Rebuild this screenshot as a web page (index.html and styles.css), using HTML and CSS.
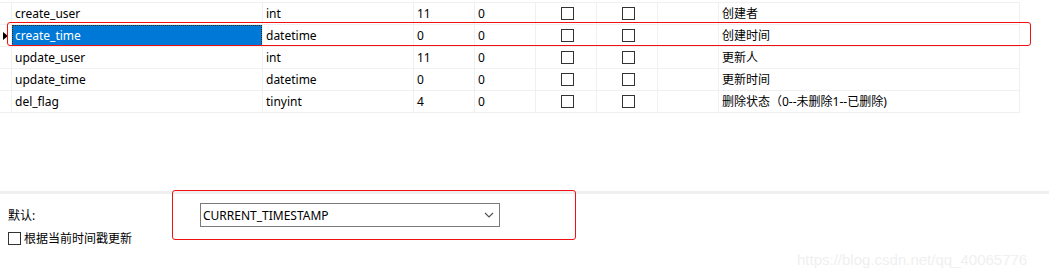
FILE: index.html
```html
<!DOCTYPE html>
<html lang="zh-CN">
<head>
    <meta charset="UTF-8">
    <title>表设计</title>
    <link rel="stylesheet" href="styles.css">
</head>
<body>
    <div class="page">
        <table class="fields">
            <colgroup>
                <col class="c-mark"><col class="c-name"><col class="c-type"><col class="c-len">
                <col class="c-dec"><col class="c-chk"><col class="c-chk"><col class="c-virt"><col class="c-note">
            </colgroup>
            <tr>
                <td class="mark"></td><td>create_user</td><td>int</td><td>11</td><td>0</td>
                <td class="chk"><span class="box"></span></td><td class="chk"><span class="box"></span></td><td></td><td>创建者</td>
            </tr>
            <tr>
                <td class="mark"><span class="arrow"></span></td><td class="selected"><span class="focus">create_time</span></td><td>datetime</td><td>0</td><td>0</td>
                <td class="chk"><span class="box"></span></td><td class="chk"><span class="box"></span></td><td></td><td>创建时间</td>
            </tr>
            <tr>
                <td class="mark"></td><td>update_user</td><td>int</td><td>11</td><td>0</td>
                <td class="chk"><span class="box"></span></td><td class="chk"><span class="box"></span></td><td></td><td>更新人</td>
            </tr>
            <tr>
                <td class="mark"></td><td>update_time</td><td>datetime</td><td>0</td><td>0</td>
                <td class="chk"><span class="box"></span></td><td class="chk"><span class="box"></span></td><td></td><td>更新时间</td>
            </tr>
            <tr>
                <td class="mark"></td><td>del_flag</td><td>tinyint</td><td>4</td><td>0</td>
                <td class="chk"><span class="box"></span></td><td class="chk"><span class="box"></span></td><td></td><td>删除状态（0--未删除1--已删除)</td>
            </tr>
        </table>

        <div class="divider"></div>

        <div class="props">
            <div class="prop-label">默认:</div>
            <div class="select">
                <span>CURRENT_TIMESTAMP</span>
                <svg class="chev" width="10" height="6" viewBox="0 0 10 6"><path d="M1 1 L5 5 L9 1" fill="none" stroke="#555" stroke-width="1.2"/></svg>
            </div>
            <label class="check"><span class="box"></span>根据当前时间戳更新</label>
        </div>

        <div class="mark-red row-mark"></div>
        <div class="mark-red prop-mark"></div>
        <div class="watermark">https://blog.csdn.net/qq_40065776</div>
    </div>
</body>
</html>
```

FILE: styles.css
```css
body {
    margin: 0;
    background: #fff;
    font-family: "Noto Sans", "Noto Sans CJK SC", sans-serif;
    font-size: 12px;
    color: #000;
}

.page {
    position: relative;
    width: 1049px;
    height: 279px;
    overflow: hidden;
    padding-top: 2px;
    box-sizing: border-box;
}

.fields {
    border-collapse: separate;
    border-spacing: 0;
    border-top: 1px solid #f0f0f0;
    table-layout: fixed;
    width: 1020px;
}

.c-mark { width: 12px; }
.c-name { width: 251px; }
.c-type { width: 151px; }
.c-len { width: 61px; }
.c-dec { width: 61px; }
.c-chk { width: 61px; }
.c-virt { width: 61px; }
.c-note { width: 301px; }

.fields td {
    height: 21px;
    padding: 0 0 0 3px;
    border-right: 1px solid #f0f0f0;
    border-bottom: 1px solid #f0f0f0;
    white-space: nowrap;
    overflow: hidden;
    line-height: 16px;
}

.fields td.mark {
    padding: 0;
}

.arrow {
    display: block;
    width: 0;
    height: 0;
    margin-left: 3px;
    border-left: 5px solid #000;
    border-top: 4px solid transparent;
    border-bottom: 4px solid transparent;
}

.fields td.selected {
    padding: 0;
    background: #0078d7;
    color: #fff;
}

.focus {
    display: block;
    height: 19px;
    line-height: 19px;
    padding-left: 2px;
    border: 1px dotted #3a2a10;
}

.fields td.chk {
    padding: 0;
}

.chk .box {
    display: block;
    margin: 0 auto;
    position: relative;
    left: 1px;
}

.box {
    display: inline-block;
    width: 11px;
    height: 11px;
    border: 1px solid #333;
    background: #fff;
}

.divider {
    margin-top: 78px;
    height: 3px;
    background: #f0f0f0;
}

.props {
    display: grid;
    grid-template-columns: 192px 300px;
    grid-template-rows: 24px 20px;
    row-gap: 1px;
    padding: 9px 8px 0;
}

.prop-label {
    align-self: center;
}

.select {
    display: flex;
    align-items: center;
    justify-content: space-between;
    border: 1px solid #7a7a7a;
    padding: 0 5px 0 2px;
}

.check {
    display: flex;
    align-items: center;
    gap: 3px;
    grid-column: 1 / 3;
}

.mark-red {
    position: absolute;
    border: 1.5px solid #f01010;
    border-radius: 3px;
}

.row-mark {
    left: 7px;
    top: 22px;
    width: 1022px;
    height: 22px;
}

.prop-mark {
    left: 172px;
    top: 190px;
    width: 402px;
    height: 48px;
}

.watermark {
    position: absolute;
    left: 797px;
    top: 251px;
    font-family: "Liberation Sans", Arial, sans-serif;
    font-size: 15px;
    color: #f0f0f0;
}
```
